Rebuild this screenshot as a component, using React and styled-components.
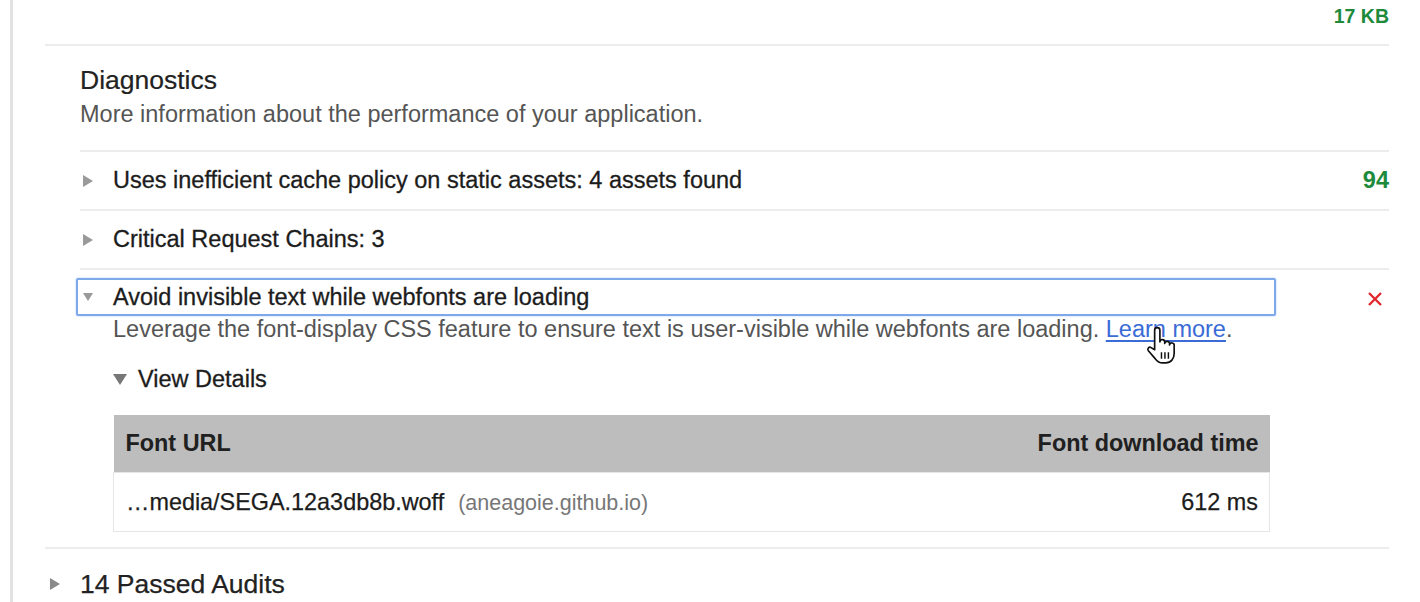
import React from "react";
import styled, { createGlobalStyle, css } from "styled-components";

const GlobalStyle = createGlobalStyle`
  html, body {
    margin: 0;
    padding: 0;
    background: #fff;
    overflow: hidden;
  }
  body {
    font-family: "Liberation Sans", Arial, Helvetica, sans-serif;
    color: #212121;
    -webkit-font-smoothing: antialiased;
  }
`;

const Page = styled.div`
  display: flex;
  min-height: 100vh;
  padding-left: 10px;
`;

const Rail = styled.div`
  width: 3px;
  flex-shrink: 0;
  background: #e2e2e2;
`;

const Main = styled.div`
  flex: 1;
  padding: 0 31px 0 32px;
`;

const TopBar = styled.div`
  height: 44px;
  display: flex;
  justify-content: flex-end;
  align-items: flex-start;
`;

const Value = styled.span`
  font-weight: bold;
  color: #1e8a3c;
  font-size: ${({ small }) => (small ? "19.5px" : "23.5px")};
  line-height: ${({ small }) => (small ? "32px" : "normal")};
`;

const Divider = styled.div`
  height: 2px;
  background: #ececec;
`;

const Group = styled.section`
  padding-left: 35px;
`;

const GroupHeader = styled.header`
  padding: 19px 0 21px;
`;

const Title = styled.h2`
  margin: 0;
  font-size: 26.5px;
  font-weight: normal;
  line-height: 30px;
  color: #222;
  -webkit-text-stroke: 0.2px #222;
`;

const Subtitle = styled.p`
  margin: 4px 0 0;
  font-size: 23.5px;
  line-height: 30px;
  color: #555;
`;

const AuditRow = styled.div`
  border-top: 2px solid #ececec;
  padding-bottom: ${({ open }) => (open ? "15px" : "0")};
`;

const AuditHeader = styled.div`
  display: flex;
  align-items: center;
  height: ${({ open }) => (open ? "38px" : "57px")};
  margin-top: ${({ open }) => (open ? "8px" : "0")};
`;

const Summary = styled.div`
  flex: 1;
  box-sizing: border-box;
  height: 38px;
  margin-left: -4px;
  padding-left: 5px;
  display: flex;
  align-items: center;
  gap: 20px;
  border: 2px solid transparent;
  border-radius: 2px;
  ${({ focused }) =>
    focused &&
    css`
      border-color: #7ea8ea;
      box-shadow: 0 0 2px rgba(66, 133, 244, 0.45);
    `}
`;

const Arrow = styled.span`
  display: inline-block;
  width: 0;
  height: 0;
  flex-shrink: 0;
  ${({ down, size = 10, color = "#9a9a9a" }) =>
    down
      ? css`
          border-left: ${size / 2}px solid transparent;
          border-right: ${size / 2}px solid transparent;
          border-top: ${size * 0.8}px solid ${color};
        `
      : css`
          border-top: ${size * 0.6}px solid transparent;
          border-bottom: ${size * 0.6}px solid transparent;
          border-left: ${size}px solid ${color};
        `}
`;

const AuditTitle = styled.span`
  font-size: 23.5px;
  color: #1c1c1c;
  -webkit-text-stroke: 0.3px #1c1c1c;
  white-space: nowrap;
`;

const Score = styled.div`
  width: 113px;
  display: flex;
  justify-content: flex-end;
  align-items: center;
`;

const FailMark = styled.svg`
  width: 16px;
  height: 16px;
  margin-right: 6px;
  margin-top: 3px;
`;

const AuditBody = styled.div`
  padding-left: 33px;
`;

const Description = styled.p`
  margin: -2px 0 0;
  font-size: 23.5px;
  line-height: 30px;
  color: #555;
`;

const LinkWrap = styled.span`
  position: relative;
`;

const Link = styled.a`
  color: #3a6bd6;
  text-decoration: underline;
  text-underline-offset: 3px;
`;

const Pointer = styled.svg`
  position: absolute;
  left: 37px;
  top: 8px;
  width: 38px;
  height: 42px;
  pointer-events: none;
`;

const DetailsToggle = styled.div`
  margin-top: 20px;
  display: flex;
  align-items: center;
  gap: 11px;
  height: 30px;
`;

const DetailsLabel = styled.span`
  font-size: 23.5px;
  color: #1c1c1c;
  -webkit-text-stroke: 0.3px #1c1c1c;
`;

const Table = styled.table`
  margin-top: 21px;
  width: 1157px;
  border-collapse: collapse;
  font-size: 23.4px;
`;

const Th = styled.th`
  background: #bdbdbd;
  height: 57px;
  padding: 0 11px 0 12px;
  text-align: ${({ align }) => align || "left"};
  font-weight: bold;
  color: #202020;
`;

const Td = styled.td`
  height: 58px;
  padding: 0 11px 0 12px;
  border: 1px solid #e6e6e6;
  border-left: ${({ align }) => (align === "right" ? "none" : "1px solid #e6e6e6")};
  border-right: ${({ align }) => (align === "right" ? "1px solid #e6e6e6" : "none")};
  text-align: ${({ align }) => align || "left"};
  color: #1c1c1c;
  -webkit-text-stroke: 0.25px #1c1c1c;
  white-space: nowrap;
`;

const Host = styled.span`
  margin-left: 14px;
  font-size: 21.5px;
  color: #777;
  -webkit-text-stroke: 0;
`;

const PassedRow = styled.div`
  margin-top: 20px;
  display: flex;
  align-items: center;
  height: 30px;
  padding-left: 5px;
  gap: 20px;
`;

const PassedLabel = styled.span`
  font-size: 26.5px;
  color: #222;
  -webkit-text-stroke: 0.25px #222;
`;

const audits = [
  { title: "Uses inefficient cache policy on static assets: 4 assets found", score: "94" },
  { title: "Critical Request Chains: 3" },
];

const HandCursor = () => (
  <Pointer viewBox="0 0 34 40">
    <path
      d="M10 6 a2.5 2.5 0 0 1 5 0 V17 a2.3 2.3 0 0 1 4.6 0.4 V18.6 a2.3 2.3 0 0 1 4.6 0.4 V20 a2.2 2.2 0 0 1 4.4 0.6 V28 c0 5 -3 9 -8 9 H17.5 c-3 0 -5 -1.5 -7 -4 L4 25.5 c-1.4 -1.9 0.6 -4.2 2.6 -3 L10 24.5 Z"
      fill="#fff"
      stroke="#111"
      strokeWidth="1.6"
      strokeLinejoin="round"
    />
    <path d="M16.5 27 V33 M19.8 27 V33 M23.1 27 V33" stroke="#111" strokeWidth="1.4" />
  </Pointer>
);

export default function App() {
  return (
    <>
      <GlobalStyle />
      <Page>
        <Rail />
        <Main>
          <TopBar>
            <Value small>17 KB</Value>
          </TopBar>
          <Divider />
          <Group>
            <GroupHeader>
              <Title>Diagnostics</Title>
              <Subtitle>More information about the performance of your application.</Subtitle>
            </GroupHeader>
            {audits.map((a) => (
              <AuditRow key={a.title}>
                <AuditHeader>
                  <Summary>
                    <Arrow />
                    <AuditTitle>{a.title}</AuditTitle>
                  </Summary>
                  <Score>{a.score && <Value>{a.score}</Value>}</Score>
                </AuditHeader>
              </AuditRow>
            ))}
            <AuditRow open>
              <AuditHeader open>
                <Summary focused>
                  <Arrow down size={11} />
                  <AuditTitle>Avoid invisible text while webfonts are loading</AuditTitle>
                </Summary>
                <Score>
                  <FailMark viewBox="0 0 16 16">
                    <path d="M2 2 L14 14 M14 2 L2 14" stroke="#e0282e" strokeWidth="2.4" />
                  </FailMark>
                </Score>
              </AuditHeader>
              <AuditBody>
                <Description>
                  Leverage the font-display CSS feature to ensure text is user-visible while webfonts are
                  loading.{" "}
                  <LinkWrap>
                    <Link href="#">Learn more</Link>
                    <HandCursor />
                  </LinkWrap>
                  .
                </Description>
                <DetailsToggle>
                  <Arrow down size={14} color="#777" />
                  <DetailsLabel>View Details</DetailsLabel>
                </DetailsToggle>
                <Table>
                  <thead>
                    <tr>
                      <Th>Font URL</Th>
                      <Th align="right">Font download time</Th>
                    </tr>
                  </thead>
                  <tbody>
                    <tr>
                      <Td>
                        …media/SEGA.12a3db8b.woff
                        <Host>(aneagoie.github.io)</Host>
                      </Td>
                      <Td align="right">612 ms</Td>
                    </tr>
                  </tbody>
                </Table>
              </AuditBody>
            </AuditRow>
          </Group>
          <Divider />
          <PassedRow>
            <Arrow size={10} color="#8a8a8a" />
            <PassedLabel>14 Passed Audits</PassedLabel>
          </PassedRow>
        </Main>
      </Page>
    </>
  );
}
